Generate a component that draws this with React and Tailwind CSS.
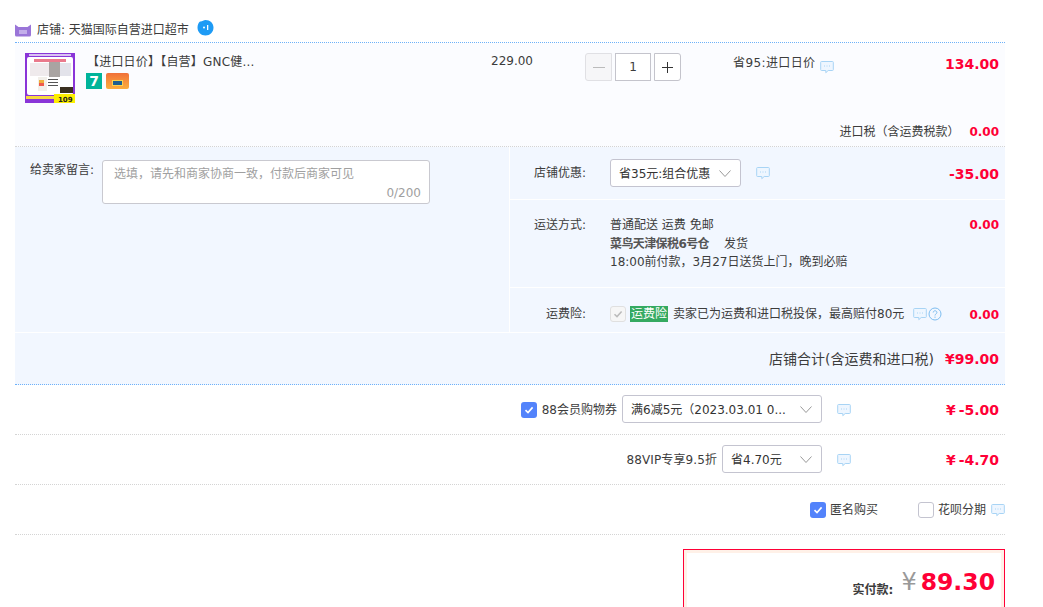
import React from 'react';

const cjk = 'font-["DejaVu_Sans","Noto_Sans_CJK_SC",sans-serif]';

const Bubble = ({ className = '' }) => (
  <svg width="14" height="14" viewBox="0 0 14 14" fill="none" className={className}>
    <path d="M1.500 1.500h11a.8.8 0 0 1 .8.8v7.400a.8.8 0 0 1-.8.8H8.200l-2.400 2.200v-2.200H1.500a.8.8 0 0 1-.8-.8V2.300a.8.8 0 0 1 .8-.8z" fill="#eef6ff" stroke="#a8d4f5" strokeWidth="1" />
    <path d="M4 6h1M6.500 6h1M9 6h1" stroke="#a8d4f5" strokeWidth="1" />
  </svg>
);

const Chevron = () => (
  <svg width="14" height="9" viewBox="0 0 14 9" fill="none">
    <path d="M1.500 1.500 7 7.500l5.500-6" stroke="#999" strokeWidth="1" />
  </svg>
);

const Select = ({ width, text }) => (
  <div className={`${width} h-[28px] bg-white border border-[#c4c4d0] rounded-[3px] flex items-center justify-between pl-2 pr-[8px] text-[12px] text-[#333] shrink-0`}>
    <span className="whitespace-nowrap pt-px">{text}</span>
    <Chevron />
  </div>
);

const Check = ({ on }) => (
  <span className={`w-4 h-4 rounded-[3px] flex items-center justify-center shrink-0 ${on ? 'bg-[#5383fb]' : 'bg-white border border-[#c4c4d0]'}`}>
    {on && (
      <svg width="10" height="10" viewBox="0 0 10 10" fill="none">
        <path d="M1.500 5.200 4 7.600 8.600 2.400" stroke="#fff" strokeWidth="1.600" />
      </svg>
    )}
  </span>
);

const Thumb = () => (
  <svg width="50" height="50" viewBox="0 0 50 50" className="shrink-0">
    <rect width="50" height="50" fill="#8a35d8" />
    <rect x="4" y="1" width="42" height="2" fill="#d9c2f2" />
    <rect x="2" y="4" width="46" height="38" rx="2" fill="#fff" />
    <rect x="9" y="6" width="32" height="3" fill="#ea7a8c" />
    <rect x="5" y="10" width="19" height="13" fill="#efeaec" />
    <rect x="24" y="9" width="11" height="15" fill="#a9a4a2" />
    <rect x="35" y="10" width="11" height="13" fill="#e3e3ea" />
    <rect x="13" y="24" width="9" height="14" fill="#f2efe9" />
    <rect x="14" y="27" width="5" height="3" fill="#f0b13c" />
    <rect x="14" y="30" width="5" height="3" fill="#ef5a4a" />
    <rect x="23" y="26" width="10" height="1" fill="#555" />
    <rect x="23" y="29" width="10" height="1" fill="#555" />
    <rect x="23" y="32" width="10" height="1" fill="#555" />
    <rect x="35" y="34" width="13" height="6" fill="#3a3020" />
    <rect x="1" y="43" width="28" height="3" fill="#f7d93f" />
    <rect x="29" y="41" width="21" height="9" fill="#fdee00" />
    <text x="33" y="49" fontSize="7" fontWeight="700" fill="#222" fontFamily="DejaVu Sans">109</text>
  </svg>
);

const Row = ({ children }) => (
  <div className="h-[50px] border-b border-dotted border-[#d4d4d4] flex items-center justify-end">{children}</div>
);

export default function App() {
  return (
    <div className={`w-[1043px] h-[607px] overflow-hidden bg-white text-[#3c3c3c] text-[12px] ${cjk}`}>
      <div className="ml-[15px] w-[990px]">
        {/* shop */}
        <div className="h-[43px] pt-[22px] flex items-center border-b border-dotted border-[#6db1f9] pb-[5px]">
          <svg width="16" height="14" viewBox="0 0 16 14" className="shrink-0">
            <path d="M0 1.500 3.500 4h9L16 1.500V12a1.500 1.500 0 0 1-1.500 1.500h-13A1.500 1.500 0 0 1 0 12z" fill="#9a75d8" />
            <rect x="4" y="7" width="8" height="4" fill="#c3aeea" />
          </svg>
          <span className="ml-[6px] text-[#3c3c3c] whitespace-nowrap">店铺: 天猫国际自营进口超市</span>
          <svg width="17" height="17" viewBox="0 0 17 17" className="ml-[8px] -mt-[5px] shrink-0">
            <path d="M8.500 1c4.500 0 8 3 8 7.500S13 16.500 8.500 16.500.5 13 .5 8.500C.5 6 1.500 3.500 3 2.500 5 3 6.500 1 8.500 1z" fill="#1e9bf5" />
            <circle cx="7" cy="8.500" r="1" fill="#fff" />
            <rect x="10" y="6" width="1.300" height="5" fill="#fff" />
          </svg>
        </div>

        {/* item */}
        <div className="h-[104px] bg-[#fbfcff] border-b border-dotted border-[#d4d4d4] flex flex-col">
          <div className="flex pt-[10px] pl-[10px] pr-[6px] h-[77px]">
            <Thumb />
            <div className="w-[416px] pl-[11px] shrink-0">
              <div className="pl-[1px] h-[19px] whitespace-nowrap tracking-[0.2px]">【进口日价】【自营】GNC健...</div>
              <div className="flex gap-[4px] mt-[1px]">
                <span className="w-4 h-4 bg-[#00b49a] text-white text-[14px] font-bold leading-[16px] text-center">7</span>
                <span className="w-[23px] h-4 rounded-[2px] bg-gradient-to-b from-[#f0703a] to-[#fbae3c] flex items-end justify-center pb-[3px]">
                  <span className="w-[11px] h-[6px] bg-[#1d5f8f] border border-[#fbd24d]" />
                </span>
              </div>
            </div>
            <div className="w-[94px] shrink-0 -mt-[1px] text-[12px]">229.00</div>
            <div className="w-[148px] shrink-0 flex items-start gap-[3px]">
              <span className="w-[27px] h-[28px] border border-[#e0e0e4] bg-[#f6f6f8] rounded-l-[3px] flex items-center justify-center">
                <span className="w-3 h-px bg-[#bbb]" />
              </span>
              <span className="w-[36px] h-[28px] border border-[#c4c4cc] bg-white flex items-center justify-center text-[12px]">1</span>
              <span className="w-[27px] h-[28px] border border-[#c4c4cc] bg-white rounded-r-[3px] flex items-center justify-center relative">
                <span className="w-[11px] h-px bg-[#333]" />
                <span className="absolute w-px h-[11px] bg-[#333]" />
              </span>
            </div>
            <div className="flex items-start whitespace-nowrap">
              <span className="tracking-[0.4px] pt-px">省95:进口日价</span>
              <Bubble className="ml-[4px] mt-[7px]" />
            </div>
            <div className="ml-auto text-[14px] font-bold text-[#ff0036] leading-[20px] mt-[1px]">134.00</div>
          </div>
          <div className="flex justify-end items-center pr-[6px] whitespace-nowrap mt-[3px]">
            <span>进口税（含运费税款）</span>
            <span className="ml-[10px] text-[12px] font-bold text-[#ff0036]">0.00</span>
          </div>
        </div>

        {/* message + options */}
        <div className="flex h-[186px] bg-[#f2f7ff] border-b border-white">
          <div className="w-[494px] shrink-0 flex items-start pt-[13px] pl-[15px]">
            <span className="w-[72px] text-[#3c3c3c] pt-[1px] whitespace-nowrap">给卖家留言:</span>
            <div className="w-[328px] h-[44px] bg-white border border-[#c9c9d0] rounded-[3px] pl-[11px] pr-[8px] pt-[4px] text-[#a0a0a0]">
              <div className="h-[20px] whitespace-nowrap">选填，请先和商家协商一致，付款后商家可见</div>
              <div className="text-right leading-[17px] text-[12px]">0/200</div>
            </div>
          </div>
          <div className="flex-1 border-l border-white flex flex-col">
            <div className="h-[53px] border-b border-white flex items-center pl-[24px] pr-[6px]">
              <span className="w-[76px] whitespace-nowrap">店铺优惠:</span>
              <Select width="w-[131px]" text="省35元:组合优惠" />
              <Bubble className="ml-[15px]" />
              <span className="ml-auto pt-[3px] text-[14px] font-bold text-[#ff0036]">-35.00</span>
            </div>
            <div className="h-[88px] border-b border-white flex items-start pl-[24px] pr-[6px] pt-[16px]">
              <span className="w-[76px] whitespace-nowrap">运送方式:</span>
              <div className="leading-[18.5px] whitespace-nowrap">
                <div>普通配送 运费 免邮</div>
                <div><span className="font-bold text-[#555] tracking-[-0.6px]">菜鸟天津保税6号仓</span><span className="ml-[15px]">发货</span></div>
                <div>18:00前付款，3月27日送货上门，晚到必赔</div>
              </div>
              <span className="ml-auto text-[12px] font-bold text-[#ff0036] leading-[18px]">0.00</span>
            </div>
            <div className="flex-1 flex items-center pl-[36px] pr-[6px] pt-[7px] whitespace-nowrap">
              <span className="w-[64px]">运费险:</span>
              <span className="w-4 h-4 rounded-[3px] bg-[#f6f6f6] border border-[#e0e0e0] flex items-center justify-center shrink-0">
                <svg width="10" height="10" viewBox="0 0 10 10" fill="none">
                  <path d="M1.500 5.200 4 7.600 8.600 2.400" stroke="#bbb" strokeWidth="1.500" />
                </svg>
              </span>
              <span className="ml-[4px] bg-[#35aa61] text-white h-[16px] leading-[16px] px-[1px]">运费险</span>
              <span className="ml-[5px]">卖家已为运费和进口税投保，最高赔付80元</span>
              <Bubble className="ml-[9px]" />
              <svg width="14" height="14" viewBox="0 0 14 14" fill="none" className="ml-[1px]">
                <circle cx="7" cy="7" r="6" stroke="#7dbdf0" strokeWidth="1" />
                <path d="M5.200 5.500c0-2.300 3.700-2.300 3.700 0 0 1.500-1.900 1.400-1.900 3" stroke="#7dbdf0" strokeWidth="1" />
                <path d="M7 9.600v1.200" stroke="#7dbdf0" strokeWidth="1" />
              </svg>
              <span className="ml-auto pt-[2px] text-[12px] font-bold text-[#ff0036]">0.00</span>
            </div>
          </div>
        </div>

        {/* total */}
        <div className="h-[52px] bg-[#f2f7ff] border-b border-dotted border-[#6db1f9] flex items-center justify-end pr-[6px] pt-[2px] whitespace-nowrap">
          <span className="text-[14px]">店铺合计(含运费和进口税)</span>
          <span className="ml-[11px] text-[14px] font-bold text-[#ff0036]">¥99.00</span>
        </div>

        {/* extras */}
        <Row>
          <Check on />
          <span className="ml-[5px] whitespace-nowrap">88会员购物券</span>
          <div className="ml-[5px] -mt-[1px]"><Select width="w-[200px]" text="满6减5元（2023.03.01 0..." /></div>
          <Bubble className="ml-[15px]" />
          <span className="w-[154px] text-right pr-[6px] pt-[2px] text-[14px] font-bold text-[#ff0036]"><span className="mr-[3px]">¥</span>-5.00</span>
        </Row>
        <Row>
          <span className="whitespace-nowrap tracking-[0.1px]">88VIP专享9.5折</span>
          <div className="ml-[5px] -mt-[1px]"><Select width="w-[100px]" text="省4.70元" /></div>
          <Bubble className="ml-[15px]" />
          <span className="w-[154px] text-right pr-[6px] pt-[2px] text-[14px] font-bold text-[#ff0036]"><span className="mr-[3px]">¥</span>-4.70</span>
        </Row>
        <Row>
          <Check on />
          <span className="ml-[4px] whitespace-nowrap">匿名购买</span>
          <span className="ml-[40px]" />
          <Check />
          <span className="ml-[4px] whitespace-nowrap">花呗分期</span>
          <Bubble className="ml-[5px]" />
        </Row>

        {/* pay */}
        <div className="flex justify-end mt-[15px]">
          <div className="w-[322px] h-[70px] border border-[#ff0036] border-b-0 bg-white -mt-px">
            <div className="h-full border-[3px] border-[#fff1e8] border-b-0 flex items-start justify-end pt-[15px] pr-[6px] whitespace-nowrap">
              <span className="font-bold text-[#3c3c3c] text-[12px] mt-[13px]">实付款:</span>
              <span className="ml-[8px] text-[24px] text-[#999] leading-[28px]">¥</span>
              <span className="ml-[4px] text-[23.5px] font-bold text-[#ff0036] leading-[28px]">89.30</span>
            </div>
          </div>
        </div>
      </div>
    </div>
  );
}
